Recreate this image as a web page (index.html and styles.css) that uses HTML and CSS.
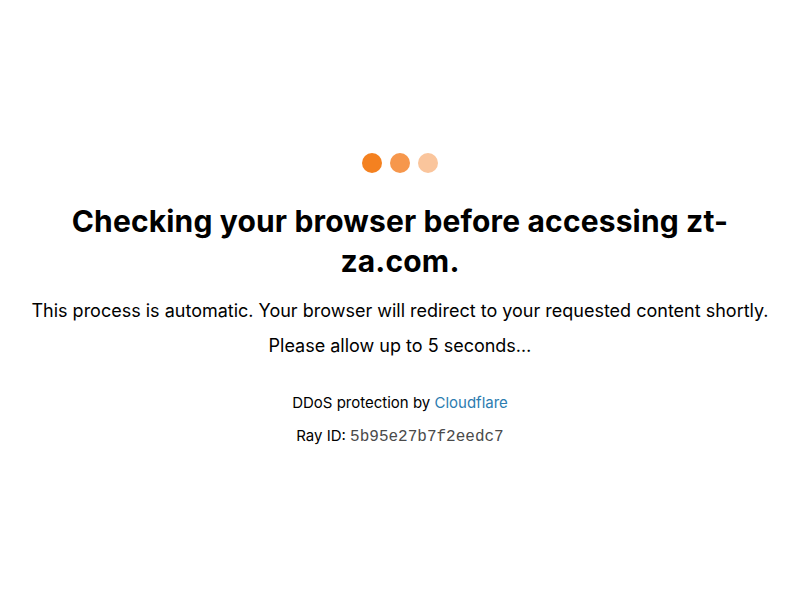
FILE: index.html
```html
<!DOCTYPE html>
<html>
<head>
<meta charset="utf-8">
<title>Just a moment...</title>
<link rel="stylesheet" href="styles.css">
</head>
<body>
<main class="page">
  <div class="dots">
    <span class="dot dot-1"></span>
    <span class="dot dot-2"></span>
    <span class="dot dot-3"></span>
  </div>
  <h1 class="title">Checking your browser before accessing zt-za.com.</h1>
  <p class="text">This process is automatic. Your browser will redirect to your requested content shortly.</p>
  <p class="text">Please allow up to 5 seconds&hellip;</p>
  <div class="footer">
    <p class="footer-line">DDoS protection by <a class="link" href="#">Cloudflare</a></p>
    <p class="footer-line">Ray ID: <code class="ray">5b95e27b7f2eedc7</code></p>
  </div>
</main>
</body>
</html>
```
FILE: styles.css
```css
html, body {
  margin: 0;
  padding: 0;
  background: #fff;
}
body {
  font-family: Inter, "Noto Sans", sans-serif;
  color: #000;
}
.page {
  width: 800px;
  padding-top: 153px;
  display: flex;
  flex-direction: column;
  align-items: center;
  text-align: center;
}
.dots {
  display: flex;
  gap: 8px;
  height: 20px;
}
.dot {
  width: 20px;
  height: 20px;
  border-radius: 50%;
  background: #f48120;
}
.dot-2 { background: #f6974c; }
.dot-3 { background: #fac59c; }
.title {
  margin: 28px 0 6px;
  font-size: 30px;
  line-height: 40px;
  font-weight: 700;
  width: 700px;
  letter-spacing: 0.15px;
}
.text {
  margin: 12px 0 0;
  font-size: 18px;
  line-height: 23px;
}
.footer {
  margin-top: 35px;
}
.footer-line {
  margin: 0 0 12px;
  font-size: 15px;
  line-height: 21px;
}
.link {
  color: #2c7cb0;
  text-decoration: none;
}
.ray {
  font-family: "Liberation Mono", "Courier New", monospace;
  font-size: 16px;
  color: #4a4a4a;
}
```
